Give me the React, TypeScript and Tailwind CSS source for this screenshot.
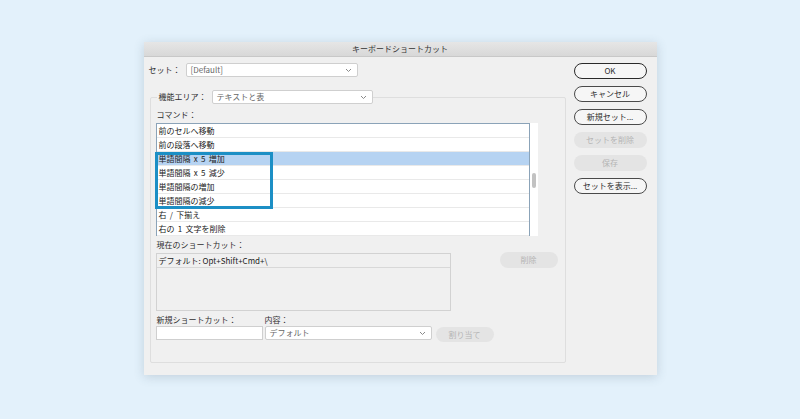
import React from "react";

const FONT = { fontFamily: '"Noto Sans CJK JP", "Noto Sans", sans-serif' };

function Chevron() {
  return (
    <svg width="7" height="5" viewBox="0 0 7 5" className="shrink-0">
      <polyline points="1,1 3.5,3.5 6,1" fill="none" stroke="#8a8a8a" strokeWidth="1" />
    </svg>
  );
}

function Select({ text, w }: { text: string; w: string }) {
  return (
    <div className={`${w} h-[14px] bg-white border border-[#cfcfcf] rounded-[2px] flex items-center justify-between pl-[4px] pr-[5px]`}>
      <span className="text-[8px] leading-none text-[#666]">{text}</span>
      <Chevron />
    </div>
  );
}

function Btn({ label, disabled, strong }: { label: string; disabled?: boolean; strong?: boolean }) {
  if (disabled) {
    return (
      <div className="w-[73px] h-[16px] rounded-full bg-[#e4e4e4] flex items-center justify-center text-[8px] leading-none text-[#b4b4b4]">
        {label}
      </div>
    );
  }
  return (
    <div
      className={`w-[73px] h-[16px] rounded-full bg-[#f6f6f6] flex items-center justify-center text-[8px] leading-none text-[#2e2e2e] ${
        strong ? "border-[1.5px] border-[#2a2a2a]" : "border border-[#4a4a4a]"
      }`}
    >
      {label}
    </div>
  );
}

const rows = [
  "前のセルへ移動",
  "前の段落へ移動",
  "単語間隔 x 5 増加",
  "単語間隔 x 5 減少",
  "単語間隔の増加",
  "単語間隔の減少",
  "右 / 下揃え",
  "右の 1 文字を削除",
];

export default function App() {
  return (
    <div className="w-[800px] h-[419px] bg-[#e3f1fb] flex justify-center pt-[42px]" style={FONT}>
      <div className="w-[513px] h-[333px] bg-[#f0f0f0] flex flex-col shadow-[0_2px_10px_rgba(60,80,100,0.2)]">
        {/* title bar */}
        <div className="h-[15px] bg-gradient-to-b from-[#e6e6e6] to-[#d8d8d8] border-b border-[#c8c8c8] flex items-center justify-center">
          <span className="text-[8px] leading-none text-[#333]">キーボードショートカット</span>
        </div>
        {/* body */}
        <div className="flex-1 flex pl-[5px]">
          {/* left column */}
          <div className="w-[416px] pt-[6px] flex flex-col">
            <div className="h-[14px] flex items-center">
              <span className="w-[37px] text-[8px] leading-none text-[#2e2e2e]">セット：</span>
              <Select text="[Default]" w="w-[172px]" />
            </div>
            {/* group box */}
            <div className="mt-[20px] ml-[1px] w-[416px] h-[266px] border border-[#dedede] rounded-[2px] flex flex-col pl-[5px]">
              <div className="-mt-[8px] h-[14px] flex items-center">
                <div className="ml-[1px] pl-[2px] h-[14px] flex items-center bg-[#f0f0f0]">
                  <span className="w-[53px] text-[8px] leading-none text-[#2e2e2e]">機能エリア：</span>
                </div>
                <Select text="テキストと表" w="w-[161px]" />
              </div>
              <div className="mt-[5px] h-[12px] flex items-center pl-[1px]">
                <span className="text-[8px] leading-none text-[#2e2e2e]">コマンド：</span>
              </div>
              <div className="mt-[2px] flex">
                <div className="relative w-[374px] h-[113px] bg-white border border-[#8ba3b8] flex flex-col">
                  {rows.map((r, i) => (
                    <div
                      key={r}
                      className={`h-[14px] shrink-0 flex items-center pl-[2px] border-b border-[#e9e9e9] ${
                        i === 2 ? "bg-[#b6d3f2]" : "bg-white"
                      }`}
                    >
                      <span className="text-[8px] leading-none text-[#222] [word-spacing:1.5px]">{r}</span>
                    </div>
                  ))}
                  <div className="absolute left-[-2px] top-[28px] w-[118px] h-[57px] border-[3px] border-[#1c8fc5]" />
                </div>
                <div className="w-[8px] h-[113px] bg-white flex flex-col items-center pt-[50px]">
                  <div className="w-[4px] h-[15px] rounded-full bg-[#c2c2c2]" />
                </div>
              </div>
              <div className="mt-[3px] h-[12px] flex items-center pl-[1px]">
                <span className="text-[8px] leading-none text-[#2e2e2e]">現在のショートカット：</span>
              </div>
              <div className="mt-[2px] flex">
                <div className="w-[295px] h-[58px] border border-[#d2d2d2] flex flex-col">
                  <div className="h-[14px] border-b border-[#d8d8d8] flex items-center pl-[2px]">
                    <span className="text-[8px] leading-none text-[#222]">デフォルト: Opt+Shift+Cmd+\</span>
                  </div>
                </div>
                <div className="ml-[49px] -mt-[1px] w-[58px] h-[16px] rounded-full bg-[#e4e4e4] flex items-center justify-center text-[8px] leading-none text-[#b4b4b4]">
                  削除
                </div>
              </div>
              <div className="mt-[3px] h-[12px] flex items-center pl-[1px]">
                <span className="w-[108px] text-[8px] leading-none text-[#2e2e2e]">新規ショートカット：</span>
                <span className="text-[8px] leading-none text-[#2e2e2e]">内容：</span>
              </div>
              <div className="flex items-start">
                <div className="w-[107px] h-[14px] bg-white border border-[#cfcfcf]" />
                <div className="ml-[2px]">
                  <Select text="デフォルト" w="w-[167px]" />
                </div>
                <div className="ml-[4px] mt-[1px] w-[58px] h-[15px] rounded-full bg-[#e4e4e4] flex items-center justify-center text-[8px] leading-none text-[#b4b4b4]">
                  割り当て
                </div>
              </div>
            </div>
          </div>
          {/* right column */}
          <div className="ml-[9px] pt-[6px] flex flex-col gap-[7px]">
            <Btn label="OK" strong />
            <Btn label="キャンセル" />
            <Btn label="新規セット..." />
            <Btn label="セットを削除" disabled />
            <Btn label="保存" disabled />
            <Btn label="セットを表示..." />
          </div>
        </div>
      </div>
    </div>
  );
}
